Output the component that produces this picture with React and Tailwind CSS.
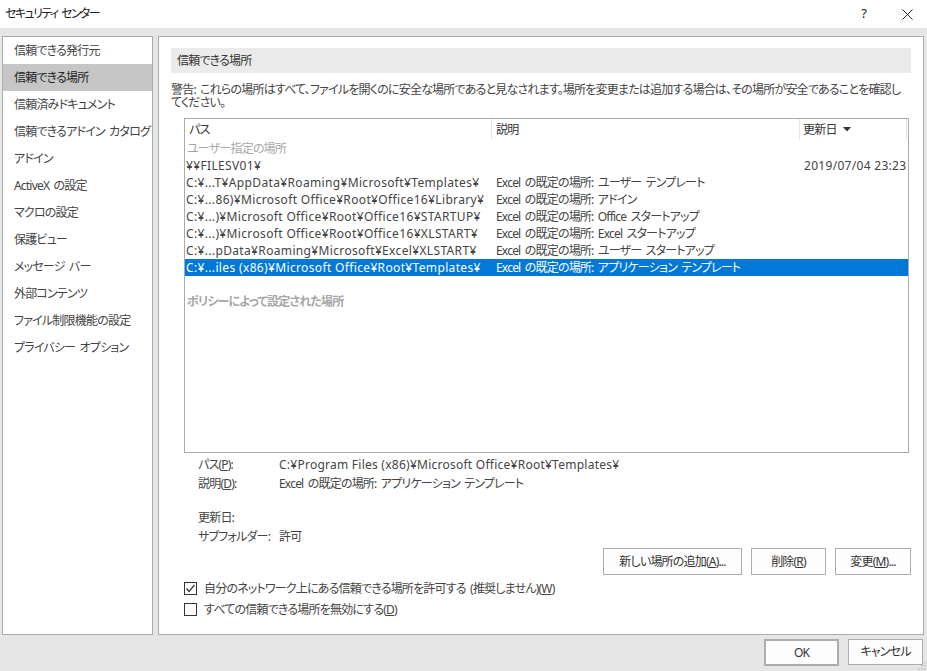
import React from 'react';

const navItems = [
    '信頼できる発行元',
    '信頼できる場所',
    '信頼済みドキュメント',
    '信頼できるアドイン カタログ',
    'アドイン',
    'ActiveX の設定',
    'マクロの設定',
    '保護ビュー',
    'メッセージ バー',
    '外部コンテンツ',
    'ファイル制限機能の設定',
    'プライバシー オプション',
];

const rows = [
    { path: '¥¥FILESV01¥', desc: '', date: '2019/07/04 23:23' },
    { path: 'C:¥...T¥AppData¥Roaming¥Microsoft¥Templates¥', desc: 'Excel の既定の場所: ユーザー テンプレート', date: '' },
    { path: 'C:¥...86)¥Microsoft Office¥Root¥Office16¥Library¥', desc: 'Excel の既定の場所: アドイン', date: '' },
    { path: 'C:¥...)¥Microsoft Office¥Root¥Office16¥STARTUP¥', desc: 'Excel の既定の場所: Office スタートアップ', date: '' },
    { path: 'C:¥...)¥Microsoft Office¥Root¥Office16¥XLSTART¥', desc: 'Excel の既定の場所: Excel スタートアップ', date: '' },
    { path: 'C:¥...pData¥Roaming¥Microsoft¥Excel¥XLSTART¥', desc: 'Excel の既定の場所: ユーザー スタートアップ', date: '' },
    { path: 'C:¥...iles (x86)¥Microsoft Office¥Root¥Templates¥', desc: 'Excel の既定の場所: アプリケーション テンプレート', date: '', selected: true },
];

const Btn = ({ children, w }) => (
    <button className={`h-[27px] ${w} border border-[#adadad] bg-[#fdfdfd] text-[#333] flex items-center justify-center`}>
        {children}
    </button>
);

const Check = ({ checked }) => (
    <div className="w-[13px] h-[13px] border border-[#333] bg-white flex items-center justify-center shrink-0">
        {checked && (
            <svg width="11" height="11" viewBox="0 0 11 11">
                <polyline points="1.5,5.5 4,8.5 9.5,2" fill="none" stroke="#333" strokeWidth="1.2" />
            </svg>
        )}
    </div>
);

const App = () => {
    return (
        <div className="w-[927px] h-[671px] bg-[#e6e6e6] flex flex-col text-[12px] text-[#444] tracking-[-0.8px] [word-spacing:2px] font-['Noto_Sans','Noto_Sans_CJK_JP',sans-serif] [font-feature-settings:'palt'] overflow-hidden relative">
            {/* Title bar */}
            <div className="h-[28px] bg-white flex items-center pl-[5px] shrink-0">
                <span className="text-[#222] tracking-[-1.6px]">セキュリティ センター</span>
                <span className="ml-auto text-[13px] text-[#222] mr-[36px]">?</span>
                <svg width="11" height="11" viewBox="0 0 11 11" className="mr-[14px]">
                    <path d="M0.5 0.5 L10.5 10.5 M10.5 0.5 L0.5 10.5" stroke="#222" strokeWidth="1" />
                </svg>
            </div>

            <div className="flex pl-[2px] pt-[8px] gap-[5px]">
                {/* Sidebar */}
                <div className="w-[151px] h-[599px] border border-[#ababab] bg-white shrink-0">
                    {navItems.map((item, i) => (
                        <div
                            key={item}
                            className={`h-[27px] flex items-center pl-[11px] whitespace-nowrap ${i === 1 ? 'bg-[#c6c6c6] text-[#222]' : ''}`}
                        >
                            {item}
                        </div>
                    ))}
                </div>

                {/* Main */}
                <div className="w-[766px] h-[599px] border border-[#ababab] bg-white px-[12px] pt-[11px] shrink-0">
                    <div className="h-[25px] bg-[#ebebeb] flex items-center pl-[6px] text-[#333]">信頼できる場所</div>

                    <div className="mt-[10px] leading-[13px] whitespace-nowrap">
                        <div>警告: これらの場所はすべて、ファイルを開くのに安全な場所であると見なされます。場所を変更または追加する場合は、その場所が安全であることを確認し</div>
                        <div>てください。</div>
                    </div>

                    <div className="ml-[13px] mt-[9px] w-[725px] h-[335px] border border-[#ababab] overflow-hidden">
                        <div className="h-[21px] flex text-[#333]">
                            <div className="w-[307px] pl-[4px] flex items-center border-r border-[#e5e5e5]">パス</div>
                            <div className="w-[308px] pl-[4px] flex items-center border-r border-[#e5e5e5]">説明</div>
                            <div className="w-[107px] pl-[3px] flex items-center gap-[6px] border-r border-[#e5e5e5]">
                                更新日
                                <svg width="8" height="5" viewBox="0 0 8 5"><polygon points="0,0 8,0 4,4.5" fill="#333" /></svg>
                            </div>
                        </div>
                        <div className="h-[17px] leading-[17px] pl-[2px] text-[#a6a6a6]">ユーザー指定の場所</div>
                        {rows.map((r) => (
                            <div
                                key={r.path}
                                className={`h-[17px] leading-[17px] flex whitespace-nowrap ${r.selected ? 'bg-[#0078d7] text-white' : ''}`}
                            >
                                <div className="w-[311px] pl-[1px] overflow-hidden tracking-[0.35px] [word-spacing:0px]">{r.path}</div>
                                <div className="w-[308px]">{r.desc}</div>
                                <div className="flex-1 tracking-[0.3px] [word-spacing:0px]">{r.date}</div>
                            </div>
                        ))}
                        <div className="h-[17px]" />
                        <div className="h-[17px] leading-[17px] pl-[2px] text-[#a6a6a6] font-bold">ポリシーによって設定された場所</div>
                    </div>

                    {/* Details */}
                    <div className="ml-[27px] mt-[2px] leading-[19px] whitespace-nowrap">
                        <div className="flex">
                            <div className="w-[81px]">パス(<span className="underline">P</span>):</div>
                            <div className="tracking-[0.25px] [word-spacing:0px]">C:¥Program Files (x86)¥Microsoft Office¥Root¥Templates¥</div>
                        </div>
                        <div className="flex">
                            <div className="w-[81px]">説明(<span className="underline">D</span>):</div>
                            <div>Excel の既定の場所: アプリケーション テンプレート</div>
                        </div>
                        <div className="h-[15px]" />
                        <div className="flex">
                            <div className="w-[81px]">更新日:</div>
                        </div>
                        <div className="flex">
                            <div className="w-[81px]">サブフォルダー:</div>
                            <div>許可</div>
                        </div>
                    </div>

                    <div className="flex justify-end gap-[9px] mt-[2px]">
                        <Btn w="w-[139px]">新しい場所の追加(<span className="underline">A</span>)...</Btn>
                        <Btn w="w-[75px]">削除(<span className="underline">R</span>)</Btn>
                        <Btn w="w-[76px]">変更(<span className="underline">M</span>)...</Btn>
                    </div>

                    <div className="mt-[3px] ml-[13px]">
                        <div className="h-[21px] flex items-center gap-[7px]">
                            <Check checked />
                            <span>自分のネットワーク上にある信頼できる場所を許可する (推奨しません)(<span className="underline">W</span>)</span>
                        </div>
                        <div className="h-[21px] flex items-center gap-[7px]">
                            <Check />
                            <span>すべての信頼できる場所を無効にする(<span className="underline">D</span>)</span>
                        </div>
                    </div>
                </div>
            </div>

            {/* Footer */}
            <div className="flex justify-end gap-[9px] pr-[4px] pt-[4px]">
                <button className="w-[75px] h-[27px] border-2 border-[#adadad] bg-[#fdfdfd] text-[#333] flex items-center justify-center">OK</button>
                <button className="w-[75px] h-[26px] border border-[#adadad] bg-[#fdfdfd] text-[#333] flex items-center justify-center">キャンセル</button>
            </div>

            {/* resize grip */}
            <svg width="10" height="10" viewBox="0 0 10 10" className="absolute right-[1px] bottom-[1px]">
                <g fill="#bcbcbc">
                    <rect x="8" y="2" width="1.5" height="1.5" />
                    <rect x="5" y="5" width="1.5" height="1.5" />
                    <rect x="8" y="5" width="1.5" height="1.5" />
                    <rect x="2" y="8" width="1.5" height="1.5" />
                    <rect x="5" y="8" width="1.5" height="1.5" />
                    <rect x="8" y="8" width="1.5" height="1.5" />
                </g>
            </svg>
        </div>
    );
};

export default App;
